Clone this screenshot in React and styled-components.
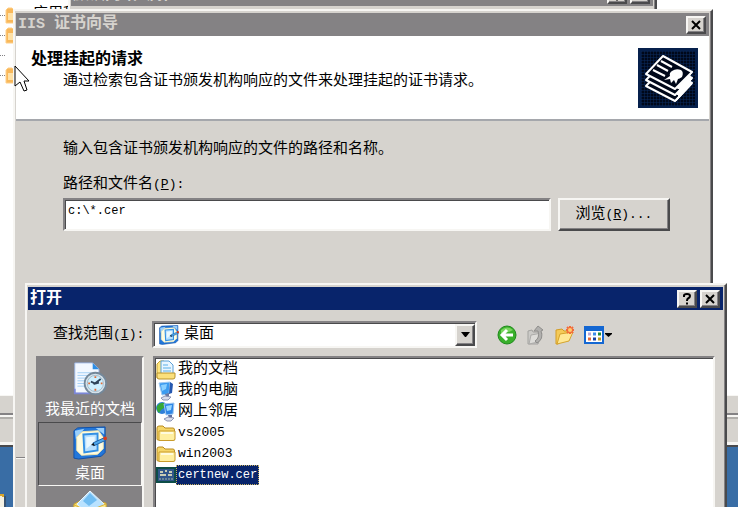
import React, {useState} from "react";
import styled, {createGlobalStyle, css} from "styled-components";

const FACE = '#D6D3CE';
const SHADOW = '#848284';
const DARK = '#4A4A4C';
const LIGHT = '#F7F6F3';
const NAVY = '#08246B';

const GlobalStyle = createGlobalStyle`
  * {
    box-sizing: border-box;
  }

  body {
    margin: 0;
    overflow: hidden;
    font-family: "Liberation Mono", "Noto Sans CJK SC", monospace;
    font-size: 15px;
    line-height: 20px;
    color: #000000;
  }

  h1, h2, p, ul {
    margin: 0;
    padding: 0;
  }

  button, input, select {
    font: inherit;
    color: inherit;
  }
`;

const raised = css`
  border: 2px solid;
  border-color: ${LIGHT} ${DARK} ${DARK} ${LIGHT};
  box-shadow: inset -1px -1px 0 ${SHADOW};
`;

const sunken = css`
  border: 2px solid;
  border-color: ${SHADOW} ${LIGHT} ${LIGHT} ${SHADOW};
  box-shadow: inset 1px 1px 0 ${DARK};
`;

const Latin = styled.span`
  font-size: ${(props) => props.$small ? '12px' : '13px'};
`;

const Desktop = styled.main`
  position: relative;
  height: 100vh;
  overflow: hidden;
  background: #396DA5;
`;

const Shortcut = styled.svg`
  position: absolute;
  left: 0;
  bottom: 0;
`;

const Console = styled.section`
  display: flex;
  flex-direction: column;
  position: absolute;
  inset: 0 0 60px 0;
  background: ${FACE};
  border-bottom: 2px solid ${DARK};
`;

const Tree = styled.ul`
  flex: 1;
  padding-top: 5px;
  background: #FFFFFF;
  list-style: none;
`;

const TreeRow = styled.li`
  display: flex;
  align-items: center;
  gap: 10px;
  height: 20px;
  white-space: nowrap;

  &::before {
    content: '';
    width: 5px;
    margin-right: -10px;
    border-top: 1px dotted ${SHADOW};
  }
`;

const ScrollStrip = styled.div`
  height: 20px;
  border-top: 1px solid ${LIGHT};
  border-bottom: 2px solid ${SHADOW};
`;

const StatusStrip = styled.div`
  height: 30px;
  border-top: 2px solid ${LIGHT};
  box-shadow: inset 0 2px 0 #B0AEAA, inset 0 -3px 0 ${LIGHT};
`;

const Window = styled.section`
  display: flex;
  flex-direction: column;
  position: absolute;
  padding: 2px 2px 2px 1px;
  background: ${FACE};
  ${raised}
`;

const PropertiesWindow = styled(Window)`
  top: -21px;
  left: 68px;
  right: 81px;
  height: 60px;
`;

const WizardWindow = styled(Window)`
  top: 9px;
  left: 13px;
  right: 25px;
  bottom: -20px;
`;

const OpenWindow = styled(Window)`
  top: 283px;
  left: 25px;
  right: 11px;
  bottom: -40px;
`;

const TitleBar = styled.header`
  display: flex;
  align-items: center;
  gap: 3px;
  flex: none;
  height: 23px;
  padding: 0 3px 0 2px;
  color: ${(props) => props.$active ? '#FFFFFF' : FACE};
  background: ${(props) => props.$active ? NAVY : SHADOW};

  h1 {
    flex: 1;
    font-size: 16px;
    line-height: 22px;
    font-weight: bold;
    white-space: nowrap;
  }

  h1 span {
    font-size: 15px;
  }
`;

const CaptionButton = styled.button`
  display: flex;
  align-items: center;
  justify-content: center;
  width: 20px;
  height: 18px;
  padding: 0;
  background: ${FACE};
  ${raised}
`;

const Banner = styled.header`
  display: flex;
  align-items: flex-start;
  justify-content: space-between;
  height: 85px;
  padding: 12px 11px 0 15px;
  background: #FFFFFF;
  border-bottom: 2px solid #A5A7AC;

  h2 {
    margin-bottom: 2px;
    font-size: 16px;
    line-height: 20px;
    font-weight: bold;
  }

  p {
    padding-left: 32px;
  }
`;

const BannerText = styled.div`
  padding-top: 2px;
`;

const WizardBody = styled.div`
  flex: 1;
  padding: 19px 39px 0 47px;
`;

const FieldLabel = styled.label`
  display: block;
  margin: 15px 0 3px;
`;

const PathRow = styled.div`
  display: flex;
  gap: 7px;
`;

const PathInput = styled.input`
  flex: 1;
  min-width: 0;
  height: 33px;
  padding: 0 3px 8px;
  font-size: 12px;
  background: #FFFFFF;
  outline: none;
  ${sunken}
`;

const BrowseButton = styled.button`
  width: 112px;
  height: 33px;
  padding: 0;
  background: ${FACE};
  ${raised}
`;

const WizardFooter = styled.footer`
  height: 66px;
  border-top: 1px solid ${SHADOW};
  box-shadow: inset 0 1px 0 ${LIGHT};
`;

const LookInBar = styled.div`
  display: flex;
  align-items: center;
  padding: 11px 110px 0 25px;

  label {
    width: 99px;
    white-space: nowrap;
  }
`;

const ComboBox = styled.div`
  display: flex;
  align-items: center;
  flex: 1;
  min-width: 0;
  height: 27px;
  padding: 1px 0 1px 5px;
  background: #FFFFFF;
  ${sunken}

  select {
    flex: 1;
    min-width: 0;
    margin-left: 5px;
    padding: 0;
    appearance: none;
    border: none;
    outline: none;
    background: transparent;
  }
`;

const ComboArrow = styled.span`
  display: flex;
  align-items: center;
  justify-content: center;
  width: 20px;
  height: 22px;
  background: ${FACE};
  ${raised}
`;

const Toolbar = styled.div`
  display: flex;
  align-items: center;
  gap: 9px;
  margin-left: 20px;
`;

const ToolButton = styled.button`
  display: flex;
  padding: 0;
  border: none;
  background: none;
`;

const Browser = styled.div`
  display: flex;
  flex: 1;
  gap: 9px;
  margin: 8px 8px 0 8px;
`;

const Places = styled.nav`
  width: 108px;
  background: ${SHADOW};
  ${sunken}
`;

const Place = styled.button`
  display: flex;
  flex-direction: column;
  align-items: center;
  gap: 5px;
  width: 100%;
  height: 64px;
  padding: 3px 0 0;
  color: #FFFFFF;
  background: ${SHADOW};
  border: 1px solid;
  border-color: ${(props) => props.$pressed ? `${DARK} ${LIGHT} ${LIGHT} ${DARK}` : 'transparent'};
`;

const FileList = styled.ul`
  flex: 1;
  padding: 1px 1px 0;
  background: #FFFFFF;
  list-style: none;
  ${sunken}
`;

const FileRow = styled.li`
  display: flex;
  align-items: center;
  height: 21px;
  cursor: default;

  span {
    padding: 0 2px;
  }

  span.selected {
    color: #FFFFFF;
    background: ${NAVY};
    outline: 1px dotted #C8B060;
    outline-offset: -1px;
  }
`;

const Pointer = styled.svg`
  position: absolute;
  top: 65px;
  left: 14px;
`;

const CloseGlyph = () => (
    <svg width="12" height="10" viewBox="0 0 12 10" stroke="#000" strokeWidth="2">
        <path d="M2 1L10 9M10 1L2 9"/>
    </svg>
)

const HelpGlyph = () => (
    <svg width="10" height="12" viewBox="0 0 10 12" fill="none" stroke="#000" strokeWidth="2">
        <path d="M2 4V2.5Q2 1 5 1T8 3Q8 4.5 6 5.5Q5 6 5 8M5 9.5V11.5"/>
    </svg>
)

const Folder = () => (
    <svg width="20" height="20" viewBox="0 0 20 20">
        <path d="M1 5Q1 3 3 3H7L9 5H17Q18.500 5 18.500 7V17H2Q1 17 1 16Z" fill="#F5D668" stroke="#B98B20"/>
        <path d="M3 8H19V16Q19 17.500 17 17.500H3Z" fill="#FFEFA0" stroke="#C99C2C"/>
        <path d="M5 10H17" stroke="#FFFBDD" strokeWidth="2"/>
    </svg>
)

const TreeFolder = () => (
    <svg width="18" height="17" viewBox="0 0 18 17">
        <path d="M1 3L3 1H7L9 3H17V16H1Z" fill="#F8B85A" stroke="#FFCF88"/>
        <path d="M3 6H8V13H3Z" fill="#FFE1A6"/>
    </svg>
)

const Documents = () => (
    <svg width="20" height="20" viewBox="0 0 20 20">
        <path d="M1 4L4 1H8V18H1Z" fill="#FFE680" stroke="#C7A235"/>
        <path d="M5 1H13L17 5V15H5Z" fill="#E9F6FF" stroke="#5AA0D8"/>
        <path d="M7 5H12M7 8H15M7 11H15" stroke="#58AFE8"/>
        <path d="M1 13H19V17Q19 19 17 19H3Q1 19 1 17Z" fill="#FBE07C" stroke="#B9942D"/>
    </svg>
)

const Computer = () => (
    <svg width="20" height="20" viewBox="0 0 20 20">
        <path d="M3 2L14 1L13 13L6 14Z" fill="#3B9BF0" stroke="#A0C8F0"/>
        <path d="M5 4L11 3L10 8L6 10Z" fill="#8AD0FF"/>
        <path d="M14 1L17 3L16 12L13 13Z" fill="#2558B0"/>
        <path d="M9 13L13 12V16H10Z" fill="#6B77A0"/>
        <path d="M5 17L9 15L15 16L12 19H7Z" fill="#D9DDEB" stroke="#8C94B4"/>
    </svg>
)

const Network = () => (
    <svg width="20" height="20" viewBox="0 0 20 20">
        <circle cx="6" cy="6" r="6" fill="#2F7FD8"/>
        <path d="M1 4Q4 0 8 1L9 5L5 8L3 11Q0 8 1 4Z" fill="#35A835"/>
        <path d="M8 2L18 1L17 12L10 13Z" fill="#2E86E6" stroke="#A0C8F0"/>
        <path d="M10 4L16 3L15 8L11 9Z" fill="#9AD8FF"/>
        <path d="M12 13H16V16H13Z" fill="#5D6CA0"/>
        <path d="M8 17L12 15L18 16L15 19H11Z" fill="#D9DDEB" stroke="#8C94B4"/>
    </svg>
)

const Certificate = () => (
    <svg width="20" height="20" viewBox="0 0 20 20">
        <rect x="1" y="3" width="18" height="14" fill="#31568A" stroke="#0D4D48" strokeWidth="2"/>
        <path d="M4 7H7M9 6H11M13 7H16M4 10H10M12 10H16" stroke="#C9CDB4" strokeWidth="2"/>
        <path d="M3 14H17" stroke="#6C8796" strokeWidth="2" strokeDasharray="2 1"/>
    </svg>
)

const DesktopIcon = ({size}) => (
    <svg width={size} height={size} viewBox="0 0 36 36">
        <path d="M1 5L5 2L34 1V28L30 32L6 35L1 34Z" fill="#2377DA" stroke="#0E4FA8"/>
        <path d="M2 5L12 3L3 14ZM24 2L33 2V9Z" fill="#9BD0FB"/>
        <path d="M10 6L27 5L32 12V24L26 30L9 31L4 26V12Z" fill="#FFFCE0" stroke="#F2E7AC"/>
        <path d="M11 9L26 8V26L12 28Z" fill="#B7E0FF" stroke="#3390E4" strokeWidth="2"/>
        <path d="M14 12L23 11V17L14 24Z" fill="#E8F7FF"/>
        <path d="M21 18L34 12L35 15L22 21Z" fill="#4FA8EC" stroke="#1F5F9F"/>
        <path d="M19 20L22 18L23 21Z" fill="#111"/>
        <circle cx="34" cy="13" r="2" fill="#D83A1A"/>
    </svg>
)

const RecentIcon = () => (
    <svg width="38" height="36" viewBox="0 0 38 38">
        <path d="M2 1H22L29 8V35H2Z" fill="#F3F8FF" stroke="#9CB6E8"/>
        <path d="M22 1V8H29Z" fill="#2C8DE4"/>
        <path d="M5 12H20M5 15H17M5 18H14M5 21H13M5 24H13M5 27H14" stroke="#9CCBF5"/>
        <path d="M2 30V35H20" fill="none" stroke="#7B86D8" strokeWidth="2"/>
        <circle cx="25" cy="24" r="12" fill="#D7E3EC" stroke="#74889A" strokeWidth="2"/>
        <circle cx="25" cy="24" r="9" fill="#CDEFFF" stroke="#9FB6C5"/>
        <path d="M25 16V18M25 30V32M17 24H19M31 24H33" stroke="#E06A36" strokeWidth="2"/>
        <path d="M23 25L31 19M20 22L25 24L29 23" fill="none" stroke="#2D4359" strokeWidth="2"/>
    </svg>
)

const MyDocumentsIcon = () => (
    <svg width="36" height="36" viewBox="0 0 36 36">
        <path d="M2 14L10 10L34 13V34H2Z" fill="#F8DD70" stroke="#C9A12C"/>
        <path d="M18 1L32 14L20 28L5 14Z" fill="#B9E2FF" stroke="#E8F6FF"/>
        <path d="M18 3L25 10L17 16L11 11Z" fill="#70BDF2"/>
        <path d="M2 15L12 19L18 24L24 18L34 14V34H2Z" fill="#FBE98F" stroke="#D8B23D"/>
    </svg>
)

const BackIcon = () => (
    <svg width="20" height="20" viewBox="0 0 20 20">
        <circle cx="10" cy="10" r="9" fill="#39B02B" stroke="#208A1C"/>
        <path d="M4 5Q10 0 16 5Q10 8 4 9Z" fill="#79D65F"/>
        <path d="M10 5L5 10L10 15M5 10H16" fill="none" stroke="#FFF" strokeWidth="3"/>
    </svg>
)

const UpIcon = () => (
    <svg width="20" height="20" viewBox="0 0 20 20">
        <path d="M2 6L6 5L7 7H14V10L12 19H2Z" fill="#CBCAC7" stroke="#A3A2A0"/>
        <path d="M5 10L16 8L12 17L3 19Z" fill="#DDDCD9" stroke="#ACABA9"/>
        <path d="M9 16Q14 13 12 6H8L12 1L17 5L15 6Q18 14 11 18Z" fill="#B1B0AE" stroke="#8F8E8C"/>
    </svg>
)

const NewFolderIcon = () => (
    <svg width="20" height="20" viewBox="0 0 20 20">
        <path d="M1 5L7 4L9 6H14V10L3 19H1Z" fill="#F4CA58" stroke="#D39C24"/>
        <path d="M5 9L18 7L14 16L2 19Z" fill="#FFE895" stroke="#D5A42D"/>
        <path d="M15 1V9M11 5H19M12 2L18 8M18 2L12 8" stroke="#F26A38" strokeWidth="2"/>
        <circle cx="15" cy="5" r="2" fill="#FFCB70"/>
    </svg>
)

const ViewIcon = () => (
    <svg width="29" height="20" viewBox="0 0 29 20">
        <rect x="1" y="2" width="18" height="16" fill="#FFF" stroke="#1467D2" strokeWidth="2"/>
        <path d="M0 1H20V6H0Z" fill="#1467D2"/>
        <path d="M4 9H7" stroke="#B9A5D8" strokeWidth="3"/>
        <path d="M9 9H12" stroke="#3D8DEC" strokeWidth="3"/>
        <path d="M14 9H17" stroke="#238A3A" strokeWidth="3"/>
        <path d="M4 14H7" stroke="#E66A3A" strokeWidth="3"/>
        <path d="M9 14H12" stroke="#173EA5" strokeWidth="3"/>
        <path d="M14 14H17" stroke="#C39B23" strokeWidth="3"/>
        <path d="M21 8H28V9L24.500 12L21 9Z" fill="#000"/>
    </svg>
)

const WizardIcon = () => (
    <svg width="60" height="60" viewBox="0 0 60 60">
        <defs>
            <pattern id="weave" width="3" height="3" patternUnits="userSpaceOnUse">
                <rect width="3" height="3" fill="#00081A"/>
                <path d="M0 0H3M0 0V3" stroke="#0A2A5E"/>
            </pattern>
        </defs>
        <rect width="60" height="60" fill="#06204C"/>
        <rect x="3" y="3" width="54" height="55" fill="url(#weave)"/>
        <g fill="#00081A" stroke="#FFF" strokeWidth="2" strokeLinejoin="round">
            <path d="M25 20L54 35L37 53L8 38Z"/>
            <path d="M25 14L54 30L37 47L8 32Z"/>
            <path d="M25 8L54 24L37 41L8 26Z"/>
        </g>
        <path d="M54 24L39 40L42 41L39 46L41 48L38 53L54 36L51 34L54 31L51 29Z" fill="#FFF" stroke="#FFF"/>
        <path d="M23 13L34 19M19 17L30 23M15 22L27 28" stroke="#FFF" strokeWidth="2"/>
        <path d="M34 23Q38 20 43 22Q46 24 44 29Q41 31 40 31L38 36L36 32L33 35L32 31L26 32L32 28Q31 25 34 23Z" fill="#FFF"/>
    </svg>
)

const files = [
    {id: 1, name: '我的文档', icon: Documents},
    {id: 2, name: '我的电脑', icon: Computer},
    {id: 3, name: '网上邻居', icon: Network},
    {id: 4, name: 'vs2005', icon: Folder, latin: true},
    {id: 5, name: 'win2003', icon: Folder, latin: true},
    {id: 6, name: 'certnew.cer', icon: Certificate, latin: true},
]

const App = () => {
    const [path, setPath] = useState('c:\\*.cer')
    const [selected, setSelected] = useState(6)
    return (
        <Desktop>
            <GlobalStyle/>
            <Shortcut width="6" height="14" viewBox="0 0 6 14">
                <path d="M0 2H4V14H0Z" fill="#F4F1E4"/>
                <path d="M0 2H3V4" fill="none" stroke="#D9A62C" strokeWidth="2"/>
                <path d="M5 3V14" stroke="#3A3A3A"/>
            </Shortcut>
            <Console>
                <Tree>
                    <TreeRow><TreeFolder/>应用程序池</TreeRow>
                    <TreeRow><TreeFolder/></TreeRow>
                    <TreeRow/>
                    <TreeRow><TreeFolder/></TreeRow>
                </Tree>
                <ScrollStrip/>
                <StatusStrip/>
            </Console>

            <PropertiesWindow>
                <TitleBar>
                    <h1>默认网站 属性</h1>
                    <CaptionButton type="button" aria-label="帮助"><HelpGlyph/></CaptionButton>
                    <CaptionButton type="button" aria-label="关闭"><CloseGlyph/></CaptionButton>
                </TitleBar>
            </PropertiesWindow>

            <WizardWindow>
                <TitleBar>
                    <h1><span>IIS </span>证书向导</h1>
                    <CaptionButton type="button" aria-label="关闭"><CloseGlyph/></CaptionButton>
                </TitleBar>
                <Banner>
                    <BannerText>
                        <h2>处理挂起的请求</h2>
                        <p>通过检索包含证书颁发机构响应的文件来处理挂起的证书请求。</p>
                    </BannerText>
                    <WizardIcon/>
                </Banner>
                <WizardBody>
                    <p>输入包含证书颁发机构响应的文件的路径和名称。</p>
                    <FieldLabel htmlFor="path">路径和文件名<Latin>(<u>P</u>):</Latin></FieldLabel>
                    <PathRow>
                        <PathInput id="path" type="text" value={path} onChange={(e) => setPath(e.target.value)}/>
                        <BrowseButton type="button">浏览<Latin>(<u>R</u>)...</Latin></BrowseButton>
                    </PathRow>
                </WizardBody>
                <WizardFooter/>
            </WizardWindow>

            <OpenWindow>
                <TitleBar $active>
                    <h1>打开</h1>
                    <CaptionButton type="button" aria-label="帮助"><HelpGlyph/></CaptionButton>
                    <CaptionButton type="button" aria-label="关闭"><CloseGlyph/></CaptionButton>
                </TitleBar>
                <LookInBar>
                    <label htmlFor="look-in">查找范围<Latin>(<u>I</u>):</Latin></label>
                    <ComboBox>
                        <DesktopIcon size={20}/>
                        <select id="look-in" defaultValue="desktop">
                            <option value="desktop">桌面</option>
                        </select>
                        <ComboArrow>
                            <svg width="9" height="5" viewBox="0 0 9 5"><path d="M0 0H9L5 5H4Z"/></svg>
                        </ComboArrow>
                    </ComboBox>
                    <Toolbar>
                        <ToolButton type="button" aria-label="后退"><BackIcon/></ToolButton>
                        <ToolButton type="button" aria-label="向上一级"><UpIcon/></ToolButton>
                        <ToolButton type="button" aria-label="新建文件夹"><NewFolderIcon/></ToolButton>
                        <ToolButton type="button" aria-label="查看"><ViewIcon/></ToolButton>
                    </Toolbar>
                </LookInBar>
                <Browser>
                    <Places>
                        <Place type="button"><RecentIcon/>我最近的文档</Place>
                        <Place type="button" $pressed><DesktopIcon size={36}/>桌面</Place>
                        <Place type="button" aria-label="我的文档"><MyDocumentsIcon/></Place>
                    </Places>
                    <FileList>
                        {files.map(({id, name, icon: Icon, latin}) => (
                            <FileRow key={id} onClick={() => setSelected(id)}>
                                <Icon/>
                                {latin
                                    ? <Latin $small={id === 6} className={selected === id ? 'selected' : ''}>{name}</Latin>
                                    : <span className={selected === id ? 'selected' : ''}>{name}</span>}
                            </FileRow>
                        ))}
                    </FileList>
                </Browser>
            </OpenWindow>

            <Pointer width="18" height="28" viewBox="0 0 18 28">
                <path d="M1 1V21L6 17L10 26L13 25L10 16H15Z" fill="#FFF" stroke="#000"/>
            </Pointer>
        </Desktop>
    )
}

export default App;
